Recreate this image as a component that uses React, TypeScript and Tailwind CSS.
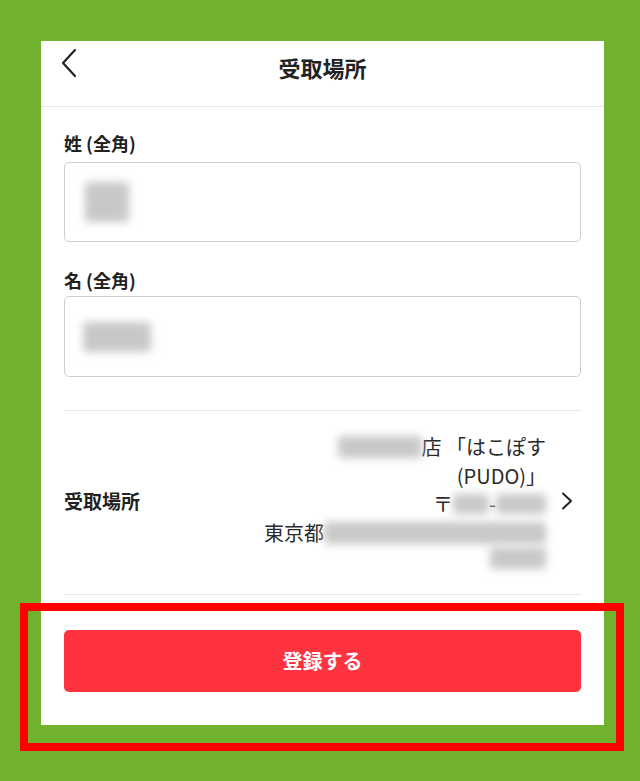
import React from "react";

const font = { fontFamily: '"Noto Sans CJK JP", "Noto Sans", sans-serif' };

function Blur({ w, h, className = "" }: { w: string; h: string; className?: string }) {
  return (
    <span className={`inline-block align-middle ${w} ${h} ${className}`}>
      <span className="block w-full h-full rounded-sm bg-[#c8c8c8] blur-[4px]" />
    </span>
  );
}

export default function App() {
  return (
    <div
      className="relative w-[640px] h-[781px] bg-[#70b22e] pt-[41px] pl-[41px] overflow-hidden"
      style={font}
    >
      <div className="w-[563px] h-[684px] bg-white flex flex-col">
        {/* header */}
        <div className="relative h-[66px] border-b border-[#e6e6e6] shrink-0">
          <svg
            className="absolute left-[19px] top-[7px]"
            width="18"
            height="30"
            viewBox="0 0 18 30"
            fill="none"
          >
            <path d="M15 2 L3 15 L15 28" stroke="#222" strokeWidth="2.2" strokeLinecap="round" strokeLinejoin="round" />
          </svg>
          <div className="pt-[12px] text-center text-[22px] leading-[28px] font-semibold text-[#222]">
            受取場所
          </div>
        </div>

        <div className="px-[23px] flex flex-col">
          <div className="mt-[24px] text-[18px] leading-[24px] font-bold text-[#222]">姓 (全角)</div>
          <div className="mt-[7px] h-[80px] rounded-[5px] border border-[#cfcfcf] flex items-center pl-[20px]">
            <Blur w="w-[44px]" h="h-[40px]" />
          </div>

          <div className="mt-[26px] text-[18px] leading-[24px] font-bold text-[#222]">名 (全角)</div>
          <div className="mt-[4px] h-[81px] rounded-[5px] border border-[#cfcfcf] flex items-center pl-[18px]">
            <Blur w="w-[68px]" h="h-[30px]" />
          </div>

          <div className="mt-[33px] border-t border-[#e6e6e6]" />

          <div className="flex items-center pt-[22px] pb-[25px]">
            <div className="text-[19px] leading-[28px] font-bold text-[#222] shrink-0">受取場所</div>
            <div className="flex-1 flex flex-col items-end text-[20px] leading-[28.5px] text-[#2a2a2a]">
              <div className="flex items-center">
                <Blur w="w-[84px]" h="h-[22px]" />
                <span>店 「はこぽす</span>
              </div>
              <div>(PUDO)」</div>
              <div className="flex items-center">
                <span>〒</span>
                <Blur w="w-[36px]" h="h-[20px]" />
                <span>-</span>
                <Blur w="w-[50px]" h="h-[20px]" />
              </div>
              <div className="flex items-center">
                <span>東京都</span>
                <Blur w="w-[222px]" h="h-[22px]" />
              </div>
              <div className="flex items-center">
                <Blur w="w-[56px]" h="h-[22px]" />
              </div>
            </div>
            <svg className="ml-[14px] mr-[7px] shrink-0" width="14" height="18" viewBox="0 0 14 18" fill="none">
              <path d="M3 1.5 L11 9 L3 16.5" stroke="#222" strokeWidth="2" strokeLinecap="round" strokeLinejoin="round" />
            </svg>
          </div>

          <div className="border-t border-[#e6e6e6]" />

          <button className="mt-[35px] h-[62px] w-full rounded-[5px] bg-[#ff3340] text-white text-[20px] font-bold">
            登録する
          </button>
        </div>
      </div>

      {/* red highlight overlay */}
      <div className="absolute left-[20px] top-[603px] w-[604px] h-[148px] border-[8px] border-[#ff0000]" />
    </div>
  );
}
